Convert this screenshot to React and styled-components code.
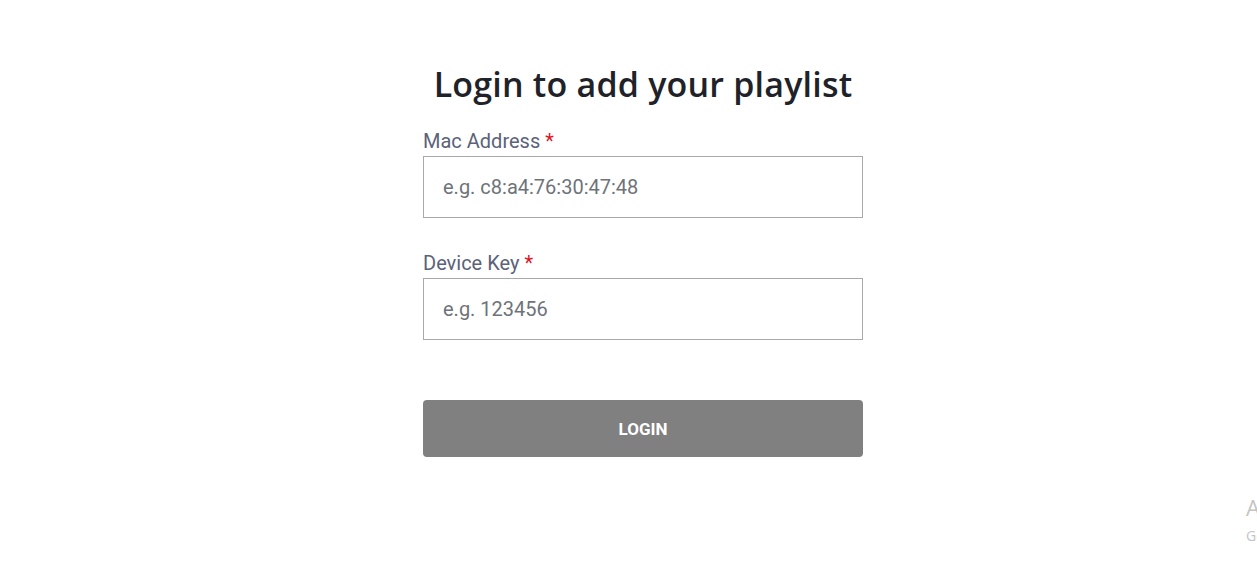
import React from "react";
import styled, { createGlobalStyle } from "styled-components";

const Global = createGlobalStyle`
  html, body { margin: 0; padding: 0; background: #fff; }
  body { font-family: Roboto, "Liberation Sans", sans-serif; overflow: hidden; }
  * { box-sizing: border-box; }
`;

const Page = styled.div`
  position: relative;
  width: 1257px;
  height: 567px;
  overflow: hidden;
  display: flex;
  justify-content: center;
  padding-left: 29px;
  padding-top: 62px;
`;

const Form = styled.form`
  width: 440px;
  display: flex;
  flex-direction: column;
`;

const Title = styled.h2`
  margin: 0 0 23px;
  text-align: center;
  font-family: "Open Sans", Lato, sans-serif;
  font-weight: 600;
  font-size: 34px;
  line-height: 44px;
  letter-spacing: 0.2px;
  color: #1f2329;
  white-space: nowrap;
`;

const Field = styled.div`
  display: flex;
  flex-direction: column;
  margin-bottom: ${(p) => p.$mb}px;
`;

const Label = styled.label`
  font-size: 20px;
  line-height: 24px;
  color: #5b6279;
  margin-bottom: 3px;
`;

const Star = styled.span`
  color: #e0131f;
`;

const Input = styled.input`
  height: 62px;
  width: 100%;
  border: 1px solid #a9a9a9;
  border-radius: 0;
  padding: 0 19px;
  font-family: Roboto, sans-serif;
  font-size: 20px;
  color: #333;
  outline: none;
  &::placeholder { color: #6e7379; }
`;

const Button = styled.button`
  height: 57px;
  width: 100%;
  border: none;
  border-radius: 4px;
  background: #808080;
  color: #fff;
  font-family: Roboto, sans-serif;
  font-weight: 700;
  font-size: 17px;
  text-transform: uppercase;
`;

const Watermark = styled.div`
  position: absolute;
  left: 1246px;
  top: 492px;
  color: #c4c4c4;
  font-family: "Open Sans", sans-serif;
  white-space: nowrap;
`;

const WmTitle = styled.div`
  font-size: 22px;
  line-height: 30px;
`;

const WmSub = styled.div`
  font-size: 14px;
  line-height: 20px;
  margin-top: 4px;
`;

export default function App() {
  return (
    <>
      <Global />
      <Page>
        <Form onSubmit={(e) => e.preventDefault()}>
          <Title>Login to add your playlist</Title>
          <Field $mb={33}>
            <Label>Mac Address <Star>*</Star></Label>
            <Input placeholder="e.g. c8:a4:76:30:47:48" />
          </Field>
          <Field $mb={60}>
            <Label>Device Key <Star>*</Star></Label>
            <Input placeholder="e.g. 123456" />
          </Field>
          <Button type="submit">Login</Button>
        </Form>
        <Watermark>
          <WmTitle>Activate Windows</WmTitle>
          <WmSub>Go to Settings to activate Windows.</WmSub>
        </Watermark>
      </Page>
    </>
  );
}
